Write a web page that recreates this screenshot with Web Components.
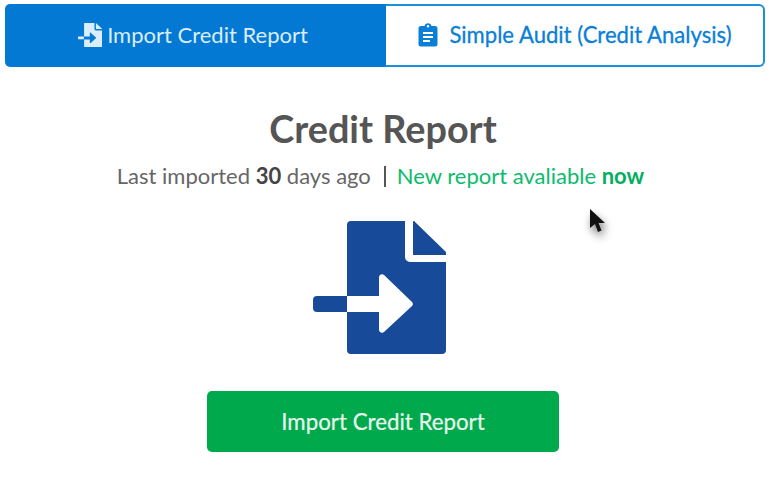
<!DOCTYPE html>
<html>
<head>
<meta charset="utf-8">
<title>Credit Report</title>
<style>
html, body { margin: 0; background: #fff; }
body { font-family: Lato, "Open Sans", sans-serif; color: #555; }
</style>
</head>
<body>
<import-page></import-page>

<template id="tpl-tab">
<style>
:host {
  display: flex;
  align-items: center;
  justify-content: center;
  gap: 5px;
  box-sizing: border-box;
  height: 100%;
  padding-bottom: 2px;
  font-size: 22px;
  color: #0b7fd6;
  background: #fff;
  cursor: pointer;
}
:host([active]) {
  background: #0479d3;
  color: #d9edfb;
}
:host(:first-child) { flex: 0 0 381px; padding-right: 5px; border-radius: 5px 0 0 5px; }
:host(:last-child) {
  flex: 1;
  gap: 10px;
  font-size: 22.1px;
  -webkit-text-stroke: .3px currentColor;
  border: 2px solid #1a90dd;
  border-left: 0;
  border-radius: 0 6px 6px 0;
}
::slotted(svg) { display: block; flex: none; }
</style>
<slot name="icon"></slot>
<span><slot></slot></span>
</template>

<template id="tpl-tabs">
<style>
:host {
  display: flex;
  height: 63px;
  margin: 4px 4px 0 5px;
}
</style>
<slot></slot>
</template>

<template id="tpl-status">
<style>
:host {
  display: flex;
  justify-content: center;
  align-items: center;
  font-size: 22px;
  line-height: 26px;
  color: #666;
}
b { font-weight: 700; color: #444; }
.sep { width: 2px; height: 21px; background: #555; margin: 0 11px 0 13px; }
.fresh { color: #0cbb6c; }
.fresh b { color: #04ae60; }
</style>
<span>Last imported <b>30</b> days ago</span>
<span class="sep"></span>
<span class="fresh">New report avaliable <b>now</b></span>
</template>

<template id="tpl-button">
<style>
:host {
  display: flex;
  align-items: center;
  justify-content: center;
  box-sizing: border-box;
  width: 352px;
  height: 61px;
  border-radius: 5px;
  background: #00a94c;
  color: #e8f8ee;
  font-size: 22.3px;
  -webkit-text-stroke: .2px currentColor;
  cursor: pointer;
}
</style>
<slot></slot>
</template>

<template id="tpl-page">
<style>
:host { display: block; position: relative; height: 481px; overflow: hidden; }
main {
  display: flex;
  flex-direction: column;
  align-items: center;
  padding-right: 3px;
}
h1 {
  margin: 39px 0 0;
  font-size: 37.8px;
  line-height: 46px;
  font-weight: 700;
  color: #555;
}
credit-status { margin: 11px 5px 0 0; }
.doc { display: block; margin: 32px 6px 0 0; }
credit-button { margin-top: 36px; }
.cursor {
  position: absolute;
  left: 589px;
  top: 208px;
  filter: drop-shadow(2px 5px 4px rgba(0,0,0,.55));
}
</style>
<credit-tabs>
  <credit-tab active>
    <svg slot="icon" width="24" height="24" viewBox="0 0 134 134">
      <path fill="currentColor" fill-rule="evenodd" d="M34 3a3 3 0 0 1 3-3H92V34a8 8 0 0 0 8 8h34V131a3 3 0 0 1-3 3H37a3 3 0 0 1-3-3V92H66v18a3 3 0 0 0 5 2L100 85a3 3 0 0 0 0-4L71 54a3 3 0 0 0-5 2V75H34Z"/>
      <path fill="currentColor" d="M100 0 133 31v3H100ZM3 75H33V91H3a3 3 0 0 1-3-3V78a3 3 0 0 1 3-3Z"/>
    </svg>
    Import Credit Report
  </credit-tab>
  <credit-tab>
    <svg slot="icon" width="22" height="24" viewBox="0 0 22 24">
      <path fill="currentColor" fill-rule="evenodd" d="M4 3h3.500a3.600 3.600 0 0 1 7 0H18a2.500 2.500 0 0 1 2.500 2.500V21a2.500 2.500 0 0 1-2.500 2.500H4A2.500 2.500 0 0 1 1.500 21V5.500A2.500 2.500 0 0 1 4 3ZM11 2a1.300 1.300 0 1 0 0 2.600A1.300 1.300 0 0 0 11 2ZM6 9v2h10V9ZM6 13v2h10v-2ZM6 17v2h7v-2Z"/>
    </svg>
    Simple Audit (Credit Analysis)
  </credit-tab>
</credit-tabs>
<main>
  <h1>Credit Report</h1>
  <credit-status></credit-status>
  <svg class="doc" width="134" height="134" viewBox="0 0 134 134" aria-hidden="true">
    <path fill="#174a99" fill-rule="evenodd" d="M34 4a4 4 0 0 1 4-4H92V36a5 5 0 0 0 5 5h36V129a4 4 0 0 1-4 4H38a4 4 0 0 1-4-4V91H66v18a3 3 0 0 0 5 2L99 85a3 3 0 0 0 0-4L71 54a3 3 0 0 0-5 2V75H34Z"/>
    <path fill="#174a99" d="M100 1a1 1 0 0 1 2 0L133 31v3H100ZM4 75H34V91H4a4 4 0 0 1-4-4V79a4 4 0 0 1 4-4Z"/>
  </svg>
  <credit-button>Import Credit Report</credit-button>
</main>
<svg class="cursor" width="18" height="26" viewBox="0 0 18 26" aria-hidden="true">
  <path fill="#111" d="M1 1V20L6 16 9 24 12.500 22.500 9.500 15H16Z"/>
</svg>
</template>

<script>
function define(name, tplId){
  customElements.define(name, class extends HTMLElement {
    constructor(){super()
      const tpl = document.getElementById(tplId)
      this.attachShadow({mode: 'open'}).appendChild(tpl.content.cloneNode(true))
    }
  })
}
define('credit-tab','tpl-tab')
define('credit-tabs','tpl-tabs')
define('credit-status','tpl-status')
define('credit-button','tpl-button')
define('import-page','tpl-page')
</script>
</body>
</html>
